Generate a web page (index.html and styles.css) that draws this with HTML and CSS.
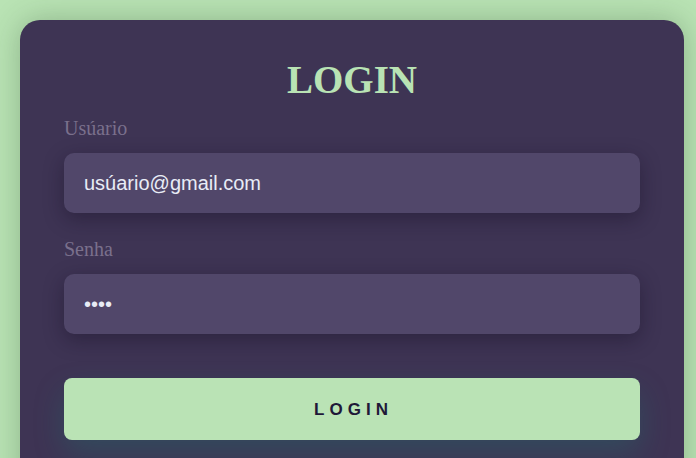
FILE: index.html
```html
<!DOCTYPE html>
<html lang="pt">
<head>
<meta charset="utf-8">
<title>Login</title>
<link rel="stylesheet" href="styles.css">
</head>
<body>
<main class="card">
  <h1 class="title">LOGIN</h1>
  <form class="form">
    <div class="field">
      <label class="label" for="user">Usúario</label>
      <input class="input" id="user" type="text" value="usúario@gmail.com">
    </div>
    <div class="field">
      <label class="label" for="pass">Senha</label>
      <input class="input" id="pass" type="password" value="1234">
    </div>
    <button class="button" type="button">LOGIN</button>
  </form>
</main>
</body>
</html>
```

FILE: styles.css
```css
html, body {
  margin: 0;
  height: 100%;
}
body {
  background: #b9e3b4;
  padding: 20px 12px 0 20px;
  box-sizing: border-box;
  overflow: hidden;
}
.card {
  background: #3e3454;
  border-radius: 20px;
  padding: 37px 44px 60px;
  box-shadow: 0 0 30px rgba(40, 70, 40, 0.3);
  min-height: 600px;
  box-sizing: border-box;
}
.title {
  margin: 0;
  font-family: "Liberation Serif", "Times New Roman", serif;
  font-weight: bold;
  font-size: 39px;
  line-height: 46px;
  color: #b9e3b4;
  text-align: center;
}
.form {
  display: flex;
  flex-direction: column;
  margin-top: 14px;
}
.field {
  display: flex;
  flex-direction: column;
  gap: 13px;
  margin-bottom: 25px;
}
.field + .field {
  margin-bottom: 44px;
}
.label {
  font-family: "Liberation Serif", "Times New Roman", serif;
  font-size: 20px;
  line-height: 23px;
  color: #7a708c;
}
.input {
  height: 60px;
  box-sizing: border-box;
  border: none;
  outline: none;
  border-radius: 10px;
  background: #51476a;
  padding: 0 20px;
  font-family: "Liberation Sans", Arial, sans-serif;
  font-size: 20px;
  color: #e8ecf6;
  box-shadow: 0 6px 20px rgba(20, 12, 35, 0.4);
}
.button {
  height: 62px;
  border: none;
  border-radius: 8px;
  background: #bae3b5;
  font-family: "Liberation Sans", Arial, sans-serif;
  font-weight: bold;
  font-size: 17px;
  letter-spacing: 5px;
  color: #1f1838;
  padding: 2px 0 0 3px;
  box-shadow: 0 14px 30px rgba(20, 140, 120, 0.25);
}
```
